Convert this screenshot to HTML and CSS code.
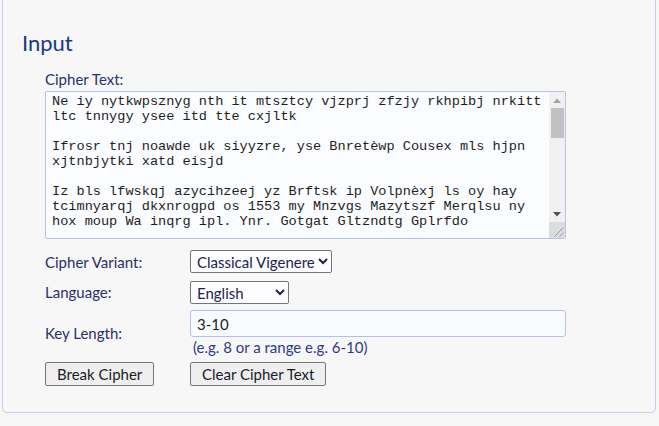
FILE: index.html
```html
<!DOCTYPE html>
<html lang="en">
<head>
<meta charset="utf-8">
<title>Input</title>
<link rel="stylesheet" href="styles.css">
</head>
<body>
<div class="page">
  <section class="panel">
    <h2 class="panel-title">Input</h2>
    <div class="form">
      <label class="field-label" for="ct">Cipher Text:</label>
      <div class="textbox">
        <textarea id="ct" class="cipher-text" spellcheck="false">Ne iy nytkwpsznyg nth it mtsztcy vjzprj zfzjy rkhpibj nrkitt
ltc tnnygy ysee itd tte cxjltk

Ifrosr tnj noawde uk siyyzre, yse Bnretèwp Cousex mls hjpn
xjtnbjytki xatd eisjd

Iz bls lfwskqj azycihzeej yz Brftsk ip Volpnèxj ls oy hay
tcimnyarqj dkxnrogpd os 1553 my Mnzvgs Mazytszf Merqlsu ny
hox moup Wa inqrg ipl. Ynr. Gotgat Gltzndtg Gplrfdo

Aqwe ynsrk fwlp dbe sxnirg qo Kjevnx ul hpta tsw jcimvb
oejrt lw bqpzy cun dyyg eftfk mlo.

Ysc abnrg xoe pitrhj duwev, tgh uwxo flaqg knoxe ys eba
zvplmc Rhsoyt fjqwn eg twzk ntf crbhu yajsz ebvi kmqo
ulgtw ddnepy.</textarea>
        <div class="vscroll" aria-hidden="true">
          <span class="sb-btn">
            <svg width="8" height="5" viewBox="0 0 8 5"><path d="M0 5 L4 0.5 L8 5 Z" fill="#a3a3a3"/></svg>
          </span>
          <span class="sb-track"><span class="sb-thumb"></span></span>
          <span class="sb-btn">
            <svg width="8" height="5" viewBox="0 0 8 5"><path d="M0 0 L8 0 L4 4.5 Z" fill="#505050"/></svg>
          </span>
          <span class="sb-corner">
            <svg width="16" height="16" viewBox="0 0 16 16">
              <path d="M14.5 5.5 L5.5 14.5 M14.5 10.5 L10.5 14.5" stroke="#9a9a9a" stroke-width="1" fill="none"/>
            </svg>
          </span>
        </div>
      </div>

      <div class="options">
        <span class="opt-label">Cipher Variant:</span>
        <div class="opt-control">
          <select class="select select-variant">
            <option>Classical Vigenere</option>
            <option>Beaufort</option>
            <option>Variant Beaufort</option>
          </select>
        </div>

        <span class="opt-label">Language:</span>
        <div class="opt-control">
          <select class="select select-lang">
            <option>English</option>
            <option>French</option>
            <option>German</option>
          </select>
        </div>

        <span class="opt-label">Key Length:</span>
        <div class="opt-control">
          <input class="text-input" type="text" value="3-10">
          <div class="hint">(e.g. 8 or a range e.g. 6-10)</div>
        </div>

        <div class="opt-button">
          <button class="btn" type="button">Break Cipher</button>
        </div>
        <div class="opt-button">
          <button class="btn" type="button">Clear Cipher Text</button>
        </div>
      </div>
    </div>
  </section>
</div>
</body>
</html>
```

FILE: styles.css
```css
html, body {
  margin: 0;
  padding: 0;
  background: #f6f6f6;
}

body {
  font-family: Lato, "Noto Sans", sans-serif;
  font-size: 15px;
  color: #2a2f66;
  overflow: hidden;
}

.page {
  padding: 0 3px 0 2px;
}

.panel {
  margin-top: -10px;
  border: 1px solid #c5cdf0;
  border-radius: 5px;
  background: #f7f7f7;
  padding: 38px 19px 26px 19px;
}

.panel-title {
  margin: 0 0 13px 0;
  font-size: 22px;
  line-height: 28px;
  font-weight: 400;
  color: #1b3a84;
}

.form {
  margin-left: 23px;
  width: 521px;
}

.field-label {
  display: block;
  line-height: 18px;
  margin-bottom: 3px;
  color: #2a3270;
}

.textbox {
  display: flex;
  box-sizing: border-box;
  width: 521px;
  height: 148px;
  border: 1px solid #b7c2ea;
  border-radius: 2px;
  background: #fbfcff;
  overflow: hidden;
}

.cipher-text {
  flex: 1;
  min-width: 0;
  box-sizing: border-box;
  margin: 0;
  padding: 2px 2px 2px 6px;
  border: 0;
  background: transparent;
  color: #1e1e1e;
  font-family: "Liberation Mono", "Courier New", monospace;
  font-size: 13.6px;
  line-height: 15px;
  resize: none;
  outline: none;
  overflow: hidden;
}

.vscroll {
  width: 16px;
  display: flex;
  flex-direction: column;
  background: #f0f0f0;
}

.sb-btn {
  height: 16px;
  display: flex;
  align-items: center;
  justify-content: center;
}

.sb-track {
  flex: 1;
  display: block;
  padding: 0 1px 0 2px;
}

.sb-thumb {
  display: block;
  height: 30px;
  background: #c1c1c1;
}

.sb-corner {
  display: block;
  height: 16px;
  background: #dcdcdc;
}

.sb-corner svg {
  display: block;
}

.options {
  display: grid;
  grid-template-columns: 145px 1fr;
  align-items: center;
  margin-top: 11px;
}

.opt-label {
  line-height: 18px;
  color: #2a2f66;
}

.opt-control {
  display: flex;
  flex-direction: column;
  align-items: flex-start;
}

.select {
  box-sizing: border-box;
  height: 23px;
  margin: 0;
  padding: 0 0 0 2px;
  border: 1px solid #767676;
  border-radius: 2px;
  background: #fdfdff;
  color: #1b2350;
  font-family: Lato, "Noto Sans", sans-serif;
  font-size: 15px;
}

.select-variant {
  width: 142px;
}

.select-lang {
  width: 99px;
  margin-top: 8px;
  margin-bottom: 6px;
}

.text-input {
  box-sizing: border-box;
  width: 376px;
  height: 27px;
  margin: 0;
  padding: 0 6px;
  border: 1px solid #b3bff0;
  border-radius: 3px;
  background: #f9fbff;
  color: #1e1e1e;
  font-family: Lato, "Noto Sans", sans-serif;
  font-size: 15px;
  outline: none;
}

.hint {
  margin-left: 3px;
  margin-top: 1px;
  line-height: 18px;
  color: #2c3b86;
}

.opt-button {
  margin-top: 6px;
}

.btn {
  box-sizing: border-box;
  height: 24px;
  margin: 0;
  padding: 0 11px;
  border: 1px solid #767676;
  border-radius: 2px;
  background: #efefef;
  color: #1a1a2a;
  font-family: Lato, "Noto Sans", sans-serif;
  font-size: 15px;
}
```
